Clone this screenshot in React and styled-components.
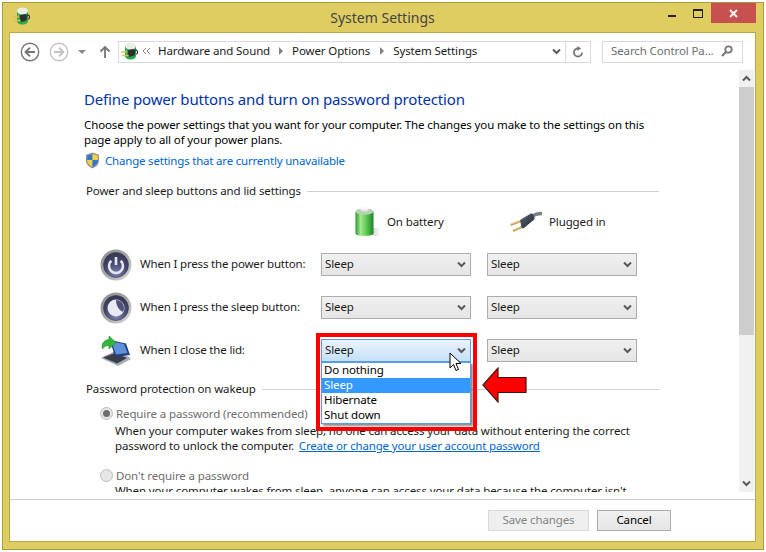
import styled, { createGlobalStyle } from "styled-components";

const GlobalStyle = createGlobalStyle`
  html, body {
    margin: 0;
    padding: 0;
    background: #fff;
  }
  * {
    box-sizing: border-box;
  }
`;

const Frame = styled.div`
  width: 762px;
  height: 548px;
  margin: 2px 0 0 2px;
  padding: 0 7px 7px 6px;
  display: flex;
  flex-direction: column;
  background: #dfcd62;
  border: 1px solid #a89a3e;
  font-family: "Noto Sans", sans-serif;
  font-size: 11.5px;
  letter-spacing: -0.12px;
  line-height: 15px;
  color: #000;
`;

const TitleBar = styled.div`
  position: relative;
  height: 29px;
  flex: none;
  display: flex;
  align-items: center;
  justify-content: center;
  font-size: 14px;
  letter-spacing: 0;
  color: #444;
`;

const TitleIcon = styled.div`
  position: absolute;
  left: 4px;
  top: 4px;
  width: 18px;
  height: 18px;
`;

const WinButtons = styled.div`
  position: absolute;
  right: 0;
  top: 0;
  display: flex;
  align-items: flex-start;
`;

const WinButton = styled.div`
  width: ${(p) => p.$w}px;
  height: 20px;
  display: flex;
  align-items: center;
  justify-content: center;
  background: ${(p) => p.$bg || "transparent"};
`;

const Client = styled.div`
  flex: 1;
  min-height: 0;
  display: flex;
  flex-direction: column;
  background: #fff;
  border: 1px solid #b8a94a;
`;

const Toolbar = styled.div`
  height: 37px;
  flex: none;
  display: flex;
  align-items: center;
  padding: 0 12px 0 10px;
`;

const NavGroup = styled.div`
  width: 98px;
  flex: none;
  display: flex;
  align-items: center;
`;

const NavGap = styled.span`
  width: 9px;
  flex: none;
`;

const AddressBar = styled.div`
  width: 473px;
  height: 22px;
  flex: none;
  display: flex;
  align-items: center;
  border: 1px solid #d9d9d9;
  padding: 0 0 2px 2px;
  color: #1a1a1a;
`;

const Crumb = styled.span`
  white-space: nowrap;
`;

const CrumbRoot = styled.svg`
  margin: 0 7px 0 3px;
  flex: none;
`;

const CrumbArrow = styled.span`
  width: 0;
  height: 0;
  flex: none;
  margin: 0 ${(p) => p.$gap}px;
  border-left: 4px solid #808080;
  border-top: 4px solid transparent;
  border-bottom: 4px solid transparent;
`;

const AddressEnd = styled.div`
  margin: 0 0 -2px auto;
  height: 20px;
  display: flex;
`;

const AddressCell = styled.div`
  width: ${(p) => p.$w}px;
  display: flex;
  align-items: center;
  justify-content: center;
  border-left: ${(p) => (p.$line ? "1px solid #d9d9d9" : "none")};
`;

const SearchBox = styled.div`
  width: 141px;
  height: 22px;
  flex: none;
  margin-left: 11px;
  padding: 0 9px 2px 8px;
  display: flex;
  align-items: center;
  justify-content: space-between;
  border: 1px solid #d9d9d9;
  color: #6d6d6d;
  white-space: nowrap;
`;

const Main = styled.div`
  height: 422px;
  flex: none;
  display: flex;
  padding-right: 1px;
`;

const Content = styled.div`
  flex: 1;
  min-width: 0;
  overflow: hidden;
  padding: 18px 0 0 74px;
`;

const Scrollbar = styled.div`
  width: 15px;
  flex: none;
  display: flex;
  flex-direction: column;
  background: #f0f0f0;
`;

const ScrollArrow = styled.div`
  height: 17px;
  flex: none;
  display: flex;
  align-items: center;
  justify-content: center;
`;

const ScrollThumb = styled.div`
  height: 248px;
  flex: none;
  margin-bottom: auto;
  background: #cdcdcd;
`;

const Heading = styled.h1`
  margin: 0;
  font-size: 15px;
  font-weight: 400;
  letter-spacing: -0.16px;
  line-height: 22px;
  color: #0033a8;
  white-space: nowrap;
`;

const Intro = styled.p`
  width: 575px;
  margin: 7px 0 0;
`;

const ShieldLink = styled.div`
  height: 16px;
  margin: 5px 0 0 1px;
  display: flex;
  align-items: center;
  gap: 5px;
  letter-spacing: -0.2px;
`;

const Link = styled.a`
  color: #0066cc;
`;

const PasswordLink = styled(Link)`
  margin-left: 2px;
  letter-spacing: -0.17px;
  text-decoration: underline;
`;

const Section = styled.div`
  width: 575px;
  margin-top: ${(p) => p.$top}px;
  padding-left: 2px;
  display: flex;
  align-items: center;
  gap: 6px;
  color: #1a1a1a;
  white-space: nowrap;

  &::after {
    content: "";
    flex: 1;
    height: 1px;
    margin-top: 1px;
    background: #cfcfcf;
  }
`;

const PowerGrid = styled.div`
  margin: 0 0 -1px 16px;
  display: grid;
  grid-template-columns: 205px 150px 150px;
  column-gap: 16px;
  align-items: center;
`;

const ColumnHead = styled.div`
  height: 30px;
  margin: 8px 0 17px;
  padding-left: ${(p) => p.$pad}px;
  display: flex;
  align-items: center;
  gap: ${(p) => p.$gap}px;
  color: #1a1a1a;
`;

const RowLabel = styled.div`
  height: 23px;
  margin-bottom: 20px;
  padding-bottom: 2px;
  display: flex;
  align-items: center;
  gap: 8px;
  white-space: nowrap;
  letter-spacing: -0.18px;
  color: #1a1a1a;
`;

const IconSlot = styled.div`
  width: 32px;
  height: 32px;
  flex: none;
  margin-top: 2px;
`;

const SelectCell = styled.div`
  position: relative;
  height: 23px;
  margin-bottom: 20px;
`;

const Select = styled.div`
  height: 23px;
  padding: 0 4px 2px 3px;
  display: flex;
  align-items: center;
  justify-content: space-between;
  border: 1px solid ${(p) => (p.$open ? "#569de5" : "#acacac")};
  background: ${(p) =>
    p.$open
      ? "linear-gradient(#ebf4fc, #c5e0f8)"
      : "linear-gradient(#f0f0f0, #e5e5e5)"};
  color: #1a1a1a;

  svg {
    margin-top: 2px;
  }
`;

const DropList = styled.div`
  position: absolute;
  left: 0;
  top: 23px;
  width: 150px;
  z-index: 2;
  border: 1px solid #569de5;
  background: #fff;
  box-shadow: 2px 2px 2px rgba(0, 0, 0, 0.45);
`;

const DropItem = styled.div`
  height: 15px;
  padding-left: 2px;
  line-height: 14px;
  background: ${(p) => (p.$active ? "#3399ff" : "transparent")};
  color: ${(p) => (p.$active ? "#fff" : "#000")};
`;

const RedBox = styled.div`
  position: absolute;
  left: -5px;
  top: -6px;
  width: 161px;
  height: 98px;
  z-index: 3;
  border: 4px solid #ff0000;
`;

const Pointer = styled.svg`
  position: absolute;
  left: 128px;
  top: 13px;
  z-index: 4;
`;

const RedArrow = styled.svg`
  position: absolute;
  left: 161px;
  top: 28px;
  z-index: 4;
`;

const RadioRow = styled.div`
  margin: ${(p) => p.$top}px 0 0 16px;
  height: 15px;
  display: flex;
  align-items: center;
  gap: 3px;
  color: #6d6d6d;
`;

const Radio = styled.span`
  width: 13px;
  height: 13px;
  flex: none;
  display: flex;
  align-items: center;
  justify-content: center;
  border: 1px solid #bcbcbc;
  border-radius: 50%;
  background: #e6e6e6;

  &::after {
    content: "";
    width: 7px;
    height: 7px;
    border-radius: 50%;
    background: ${(p) => (p.$checked ? "#6d6d6d" : "transparent")};
  }
`;

const RadioText = styled.p`
  width: 530px;
  margin: ${(p) => p.$top}px 0 0 31px;
  color: #1a1a1a;
`;

const Footer = styled.div`
  flex: 1;
  margin-top: 7px;
  padding: 10px 84px 0 0;
  display: flex;
  justify-content: flex-end;
  align-items: flex-start;
  gap: 8px;
  border-top: 1px solid #d0d0d0;
`;

const Button = styled.div`
  width: ${(p) => p.$w}px;
  height: 21px;
  padding-bottom: 2px;
  display: flex;
  align-items: center;
  justify-content: center;
  border: 1px solid ${(p) => (p.$disabled ? "#d9d9d9" : "#acacac")};
  background: ${(p) =>
    p.$disabled ? "#efefef" : "linear-gradient(#f0f0f0, #e5e5e5)"};
  color: ${(p) => (p.$disabled ? "#838383" : "#000")};
`;

function Chevron({ color = "#5a5a5a", up = false }) {
  return (
    <svg width="9" height="7" viewBox="0 0 9 7">
      <path
        d={up ? "M1 5.5 4.5 2 8 5.5" : "M1 1.5 4.5 5 8 1.5"}
        fill="none"
        stroke={color}
        strokeWidth="2"
      />
    </svg>
  );
}

function NavCircle({ color, dir }) {
  const arrow =
    dir === "left"
      ? "M15 10H6M10 5.6 5.6 10l4.4 4.4"
      : "M5 10h9M10 5.6 14.4 10 10 14.4";
  return (
    <svg width="20" height="20" viewBox="0 0 20 20">
      <circle cx="10" cy="10" r="8.7" fill="#fff" stroke={color} strokeWidth="1.4" />
      <path d={arrow} fill="none" stroke={color} strokeWidth="2" />
    </svg>
  );
}

function Shield() {
  return (
    <svg width="15" height="17" viewBox="0 0 15 17">
      <path d="M7.5.5 14 2.800v6c0 3.600-3 6.200-6.500 7.700C4 15 1 12.400 1 8.800v-6z" fill="#8f949b" />
      <path d="M7.500 2V8H2.200V3.700z" fill="#2f78d0" />
      <path d="M7.500 2 12.800 3.700V8H7.500z" fill="#f6cf3a" />
      <path d="M2.200 8h5.300v7C4.600 13.700 2.200 11.400 2.200 8.800z" fill="#f6cf3a" />
      <path d="M7.500 8h5.300v.8c0 2.600-2.400 4.900-5.300 6.200z" fill="#2f78d0" />
    </svg>
  );
}

function BatteryIcon() {
  return (
    <svg width="30" height="30" viewBox="0 0 30 30">
      <defs>
        <linearGradient id="battery-body" x1="0" x2="1" y1="0" y2="0">
          <stop offset="0" stopColor="#1f9a2c" />
          <stop offset="0.28" stopColor="#a5e890" />
          <stop offset="0.6" stopColor="#5fcb52" />
          <stop offset="1" stopColor="#17852a" />
        </linearGradient>
        <linearGradient id="battery-shade" x1="0" x2="1" y1="0" y2="0">
          <stop offset="0" stopColor="#b5b5b5" />
          <stop offset="1" stopColor="#ffffff" />
        </linearGradient>
      </defs>
      <path d="M18 22h7v8h-7z" fill="url(#battery-shade)" opacity="0.6" />
      <path d="M.5 5.500h18v22c0 1.500-4 2.300-9 2.300s-9-.8-9-2.300z" fill="url(#battery-body)" />
      <ellipse cx="9.500" cy="5.500" rx="9" ry="3.200" fill="#b9cfb6" />
      <path d="M5.500 4.500V2.500C6.500 1 12.500 1 13.500 2.500v2c-1 1.500-7 1.500-8 0z" fill="#dce5da" />
      <ellipse cx="9.500" cy="2.300" rx="4" ry="1.500" fill="#f7f9f7" />
    </svg>
  );
}

function PlugIcon() {
  return (
    <svg width="34" height="26" viewBox="0 0 34 26">
      <defs>
        <linearGradient id="plug-body" x1="0" x2="1" y1="0" y2="1">
          <stop offset="0" stopColor="#5a6478" />
          <stop offset="1" stopColor="#23262e" />
        </linearGradient>
      </defs>
      <g transform="translate(0 2)">
        <path d="M22 7c3-2.500 6-3.500 11-3.500" fill="none" stroke="#7b7f88" strokeWidth="3.500" />
        <path d="M1.500 15 12 11M4 21l11-5" stroke="#c39b52" strokeWidth="2.200" />
        <path d="M1.500 14.500 12 10.500M4 20.500l11-5" stroke="#f0d89a" strokeWidth="0.7" />
        <path d="M11 10 21 4c2-1 3 0 4 2s.5 3.500-1 4.500L15 18c-1 .5-2 .5-2.500-.5z" fill="url(#plug-body)" />
      </g>
    </svg>
  );
}

function ButtonFace({ id, children }) {
  return (
    <svg width="32" height="32" viewBox="0 0 32 32">
      <defs>
        <linearGradient id={`${id}-ring`} x1="0" x2="1" y1="0" y2="1">
          <stop offset="0" stopColor="#8c8c8c" />
          <stop offset="0.5" stopColor="#a8a8a8" />
          <stop offset="1" stopColor="#dcdcdc" />
        </linearGradient>
        <radialGradient id={`${id}-face`} cx="0.5" cy="0.85" r="0.85">
          <stop offset="0" stopColor="#7d80ad" />
          <stop offset="0.55" stopColor="#45476f" />
          <stop offset="1" stopColor="#343653" />
        </radialGradient>
      </defs>
      <circle cx="16" cy="16" r="15.500" fill={`url(#${id}-ring)`} />
      <circle cx="16" cy="16" r="12.500" fill={`url(#${id}-face)`} stroke="#3a3a4a" strokeWidth="0.6" />
      {children}
    </svg>
  );
}

function PowerIcon() {
  return (
    <ButtonFace id="power">
      <g fill="none" stroke="#e6e6ee" strokeWidth="2.600">
        <path d="M11.300 11.800a7 7 0 1 0 9.400 0" />
        <path d="M16 8v8" />
      </g>
    </ButtonFace>
  );
}

function SleepIcon() {
  return (
    <ButtonFace id="sleep">
      <circle cx="16" cy="16" r="8.500" fill="#e9e9f2" />
      <path d="M16 8c4.500 0 8 3.500 8 8 0 1.500-.4 2.800-1 3.800-3.500-1-7-6-7-11.800z" fill="#50527c" />
    </ButtonFace>
  );
}

function LidIcon() {
  return (
    <svg width="32" height="32" viewBox="0 0 32 32">
      <path d="M1 23 18 31l13-7-2-2-14-6z" fill="#a5adb8" />
      <path d="M3 22.500 17 28.500l10-5.500-12-5z" fill="#3a3f4a" />
      <path d="M11 7 27 10.500 31 22 16 24z" fill="#243f80" transform="translate(-1 -2)" />
      <path d="M12.500 8.500 25 11 28.500 20 17 21.500z" fill="#5f92da" transform="translate(-1 -2)" />
      <path d="M9 1v3.500C4 5 1 8.500 2.500 14 4 11.500 6 10.500 9 10.500V14l7-6.500z" fill="#35b53a" stroke="#1f8a2a" strokeWidth="0.6" />
    </svg>
  );
}

function TitleGlyph() {
  return (
    <svg width="18" height="18" viewBox="0 0 18 18">
      <path d="M4 4h11v10c0 2-2.500 3.500-5.500 3.500S4 16 4 14z" fill="#2aa84a" />
      <ellipse cx="9.500" cy="4" rx="5.500" ry="3.500" fill="#e9efe6" />
      <path d="M5 8c3 1.500 6 1.500 9 0" fill="none" stroke="#8edb98" strokeWidth="1" />
      <path d="M6 8.500 12 7l2.500 1.500-1 5L8 15z" fill="#2e3033" />
      <path d="M14 8c2.500-.5 3.500 2 1.500 4.500" fill="none" stroke="#2e3033" strokeWidth="1.200" />
      <path d="M0 10h6.500M1 13.500h6.500" stroke="#d8c25a" strokeWidth="1.400" />
    </svg>
  );
}

function SelectBox({ open }) {
  return (
    <Select $open={open}>
      Sleep
      <Chevron />
    </Select>
  );
}

function App() {
  return (
    <>
      <GlobalStyle />
      <Frame>
        <TitleBar>
          <TitleIcon>
            <TitleGlyph />
          </TitleIcon>
          System Settings
          <WinButtons>
            <WinButton $w={26}>
              <svg width="9" height="10" viewBox="0 0 9 10">
                <rect x="0" y="7" width="8" height="2" fill="#222" />
              </svg>
            </WinButton>
            <WinButton $w={26}>
              <svg width="10" height="9" viewBox="0 0 10 9">
                <rect x="0.500" y="1" width="9" height="7.500" fill="none" stroke="#222" />
                <rect x="0" y="0" width="10" height="2" fill="#222" />
              </svg>
            </WinButton>
            <WinButton $w={45} $bg="#c75050">
              <svg width="9" height="9" viewBox="0 0 9 9">
                <path d="M1 1 8 8M8 1 1 8" stroke="#fff" strokeWidth="1.800" />
              </svg>
            </WinButton>
          </WinButtons>
        </TitleBar>
        <Client>
          <Toolbar>
            <NavGroup>
              <NavCircle color="#757575" dir="left" />
              <NavGap />
              <NavCircle color="#c4c4c4" dir="right" />
              <svg width="29" height="6" viewBox="0 0 29 6">
                <path d="M9 1h8l-4 4z" fill="#8a8a8a" />
              </svg>
              <svg width="14" height="14" viewBox="0 0 14 14">
                <path d="M7 13V2M2.500 6.500 7 2l4.500 4.500" fill="none" stroke="#757575" strokeWidth="1.800" />
              </svg>
            </NavGroup>
            <AddressBar>
              <TitleGlyph />
              <CrumbRoot width="9" height="8" viewBox="0 0 9 8">
                <path d="M4 1 1 4l3 3M8 1 5 4l3 3" fill="none" stroke="#808080" strokeWidth="1" />
              </CrumbRoot>
              <Crumb>Hardware and Sound</Crumb>
              <CrumbArrow $gap={9} />
              <Crumb>Power Options</Crumb>
              <CrumbArrow $gap={9.5} />
              <Crumb>System Settings</Crumb>
              <AddressEnd>
                <AddressCell $w={18}>
                  <Chevron />
                </AddressCell>
                <AddressCell $w={25} $line>
                  <svg width="12" height="12" viewBox="0 0 12 12">
                    <path d="M10 6.500A4 4 0 1 1 6 2.500" fill="none" stroke="#757575" strokeWidth="1.800" />
                    <path d="M5.500 0v5l3.500-2.500z" fill="#757575" />
                  </svg>
                </AddressCell>
              </AddressEnd>
            </AddressBar>
            <SearchBox>
              Search Control Pa...
              <svg width="12" height="12" viewBox="0 0 12 12">
                <circle cx="7.500" cy="4.500" r="3.200" fill="none" stroke="#757575" strokeWidth="1.800" />
                <path d="M5 7 1 11" stroke="#757575" strokeWidth="2.200" />
              </svg>
            </SearchBox>
          </Toolbar>
          <Main>
            <Content>
              <Heading>Define power buttons and turn on password protection</Heading>
              <Intro>
                Choose the power settings that you want for your computer. The changes you make to the settings on this page apply to all of your power plans.
              </Intro>
              <ShieldLink>
                <Shield />
                <Link>Change settings that are currently unavailable</Link>
              </ShieldLink>
              <Section $top={15}>Power and sleep buttons and lid settings</Section>
              <PowerGrid>
                <span />
                <ColumnHead $pad={34} $gap={2}>
                  <BatteryIcon />
                  On battery
                </ColumnHead>
                <ColumnHead $pad={22} $gap={6}>
                  <PlugIcon />
                  Plugged in
                </ColumnHead>

                <RowLabel>
                  <IconSlot>
                    <PowerIcon />
                  </IconSlot>
                  When I press the power button:
                </RowLabel>
                <SelectCell>
                  <SelectBox />
                </SelectCell>
                <SelectCell>
                  <SelectBox />
                </SelectCell>

                <RowLabel>
                  <IconSlot>
                    <SleepIcon />
                  </IconSlot>
                  When I press the sleep button:
                </RowLabel>
                <SelectCell>
                  <SelectBox />
                </SelectCell>
                <SelectCell>
                  <SelectBox />
                </SelectCell>

                <RowLabel>
                  <IconSlot>
                    <LidIcon />
                  </IconSlot>
                  When I close the lid:
                </RowLabel>
                <SelectCell>
                  <SelectBox open />
                  <DropList>
                    <DropItem>Do nothing</DropItem>
                    <DropItem $active>Sleep</DropItem>
                    <DropItem>Hibernate</DropItem>
                    <DropItem>Shut down</DropItem>
                  </DropList>
                  <RedBox />
                  <Pointer width="13" height="20" viewBox="0 0 13 20">
                    <path d="M1 1v15l3.500-3.500 2.500 6 2.500-1-2.500-6H12z" fill="#fff" stroke="#000" strokeWidth="1" />
                  </Pointer>
                  <RedArrow width="45" height="36" viewBox="0 0 45 36">
                    <path d="M1 18 16 1v9.500h28v15H16V35z" fill="#ff0000" stroke="#4a1010" strokeWidth="1.200" />
                  </RedArrow>
                </SelectCell>
                <SelectCell>
                  <SelectBox />
                </SelectCell>
              </PowerGrid>
              <Section $top={0}>Password protection on wakeup</Section>
              <RadioRow $top={10}>
                <Radio $checked />
                Require a password (recommended)
              </RadioRow>
              <RadioText $top={2}>
                When your computer wakes from sleep, no one can access your data without entering the correct password to unlock the computer.{" "}
                <PasswordLink>Create or change your user account password</PasswordLink>
              </RadioText>
              <RadioRow $top={15}>
                <Radio />
                Don't require a password
              </RadioRow>
              <RadioText $top={0}>
                When your computer wakes from sleep, anyone can access your data because the computer isn't locked.
              </RadioText>
            </Content>
            <Scrollbar>
              <ScrollArrow>
                <Chevron up />
              </ScrollArrow>
              <ScrollThumb />
              <ScrollArrow>
                <Chevron />
              </ScrollArrow>
            </Scrollbar>
          </Main>
          <Footer>
            <Button $w={101} $disabled>
              Save changes
            </Button>
            <Button $w={74}>Cancel</Button>
          </Footer>
        </Client>
      </Frame>
    </>
  );
}

export default App;
